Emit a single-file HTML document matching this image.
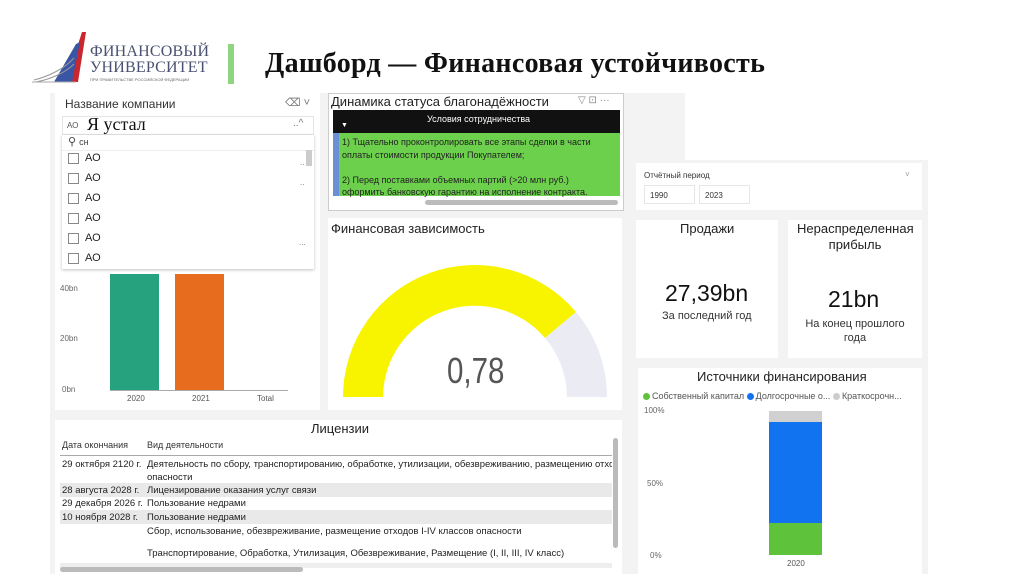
<!DOCTYPE html>
<html><head><meta charset="utf-8"><style>
*{margin:0;padding:0;box-sizing:border-box}
body{width:1024px;height:574px;background:#fff;position:relative;overflow:hidden;font-family:"Liberation Sans","DejaVu Sans",sans-serif;color:#252423}
.a{position:absolute}
.card{position:absolute;background:#fff}
.t{position:absolute;white-space:nowrap}
.s{font-family:"Liberation Sans",sans-serif}
.cb{position:absolute;width:11px;height:11px;border:1px solid #888;background:#fff}
.dot{display:inline-block;width:7px;height:7px;border-radius:50%;margin-right:2px;vertical-align:-0.5px}
</style></head><body>
<div class="a" style="left:50px;top:93px;width:635px;height:481px;background:#f3f3f3"></div>
<div class="a" style="left:630px;top:160px;width:298px;height:414px;background:#f3f3f3"></div>

<svg class="a" style="left:30px;top:30px" width="70" height="55">
<polygon points="52,2 56,2 48,52 36,52" fill="#c8282d"/>
<polygon points="46,14 50,12 42,52 24,52" fill="#3a55a4"/>
<path d="M4,50 C20,46 35,38 44,28" stroke="#999" fill="none" stroke-width="1"/>
<path d="M6,52 C22,49 36,42 44,34" stroke="#999" fill="none" stroke-width="1"/>
<line x1="2" y1="52" x2="46" y2="52" stroke="#aaa"/>
</svg>
<div class="t" style="left:90px;top:43px;font-family:'Liberation Serif',serif;font-size:16px;color:#4a5070;letter-spacing:0.2px">ФИНАНСОВЫЙ</div>
<div class="t" style="left:90px;top:59px;font-family:'Liberation Serif',serif;font-size:16px;color:#4a5070;letter-spacing:0.2px">УНИВЕРСИТЕТ</div>
<div class="t" style="left:90px;top:77px;font-size:4px;color:#666">ПРИ ПРАВИТЕЛЬСТВЕ РОССИЙСКОЙ ФЕДЕРАЦИИ</div>
<div class="a" style="left:228px;top:44px;width:6px;height:40px;background:#8fd47f"></div>
<div class="t" style="left:265px;top:48px;font-family:'Liberation Serif',serif;font-weight:bold;font-size:28px;letter-spacing:0.3px;color:#111">Дашборд — Финансовая устойчивость</div>

<div class="card" style="left:55px;top:214px;width:265px;height:196px"></div>
<div class="t" style="left:59px;top:222px;font-size:14px">Г</div>
<div class="t s" style="left:60px;top:284px;font-size:8px;color:#666">40bn</div>
<div class="t s" style="left:60px;top:334px;font-size:8px;color:#666">20bn</div>
<div class="t s" style="left:62px;top:385px;font-size:8px;color:#666">0bn</div>
<div class="a" style="left:110px;top:272px;width:49px;height:119px;background:#27a27e"></div>
<div class="a" style="left:175px;top:272px;width:49px;height:119px;background:#e86c1d"></div>
<div class="a" style="left:110px;top:390px;width:178px;height:1px;background:#aaa"></div>
<div class="t s" style="left:127px;top:394px;font-size:8px;color:#555">2020</div>
<div class="t s" style="left:192px;top:394px;font-size:8px;color:#555">2021</div>
<div class="t s" style="left:257px;top:394px;font-size:8px;color:#555">Total</div>

<div class="card" style="left:55px;top:92px;width:265px;height:182px"></div>
<div class="t" style="left:65px;top:97px;font-size:12px;color:#333">Название компании</div>
<div class="t" style="left:285px;top:96px;font-size:11px;color:#777">⌫ ˅</div>
<div class="a" style="left:62px;top:116px;width:252px;height:19px;border:1px solid #e4e4e4"></div>
<div class="t s" style="left:67px;top:121px;font-size:8px;color:#555">АО</div>
<div class="t" style="left:87px;top:114px;font-family:'Liberation Serif',serif;font-size:18px;color:#111">Я устал</div>
<div class="t" style="left:293px;top:118px;font-size:10px;color:#777">..^</div>
<div class="a" style="left:62px;top:135px;width:252px;height:134px;background:#fff;box-shadow:0 1px 3px rgba(0,0,0,.25)"></div>
<div class="t" style="left:68px;top:135px;font-size:11px;color:#444">⚲ <span class="s" style="font-size:9px">сн</span></div>
<div class="a" style="left:62px;top:150px;width:252px;height:1px;background:#eee"></div>
<div class="a" style="left:306px;top:150px;width:6px;height:16px;background:#ccc"></div>
<div class="cb" style="left:68px;top:153px"></div><div class="t s" style="left:85px;top:152px;font-size:11px">АО</div>
<div class="cb" style="left:68px;top:173px"></div><div class="t s" style="left:85px;top:172px;font-size:11px">АО</div>
<div class="cb" style="left:68px;top:193px"></div><div class="t s" style="left:85px;top:192px;font-size:11px">АО</div>
<div class="cb" style="left:68px;top:213px"></div><div class="t s" style="left:85px;top:212px;font-size:11px">АО</div>
<div class="cb" style="left:68px;top:233px"></div><div class="t s" style="left:85px;top:232px;font-size:11px">АО</div>
<div class="cb" style="left:68px;top:253px"></div><div class="t s" style="left:85px;top:252px;font-size:11px">АО</div>
<div class="t" style="left:300px;top:158px;font-size:8px;color:#777">..</div>
<div class="t" style="left:300px;top:178px;font-size:8px;color:#777">..</div>
<div class="t" style="left:299px;top:238px;font-size:8px;color:#777">...</div>

<div class="card" style="left:328px;top:93px;width:296px;height:118px;border:1px solid #ccc"></div>
<div class="t" style="left:331px;top:94px;font-size:13px;color:#222">Динамика статуса благонадёжности</div>
<div class="t" style="left:578px;top:95px;font-size:10px;color:#888">▽ ⊡ ···</div>
<div class="a" style="left:333px;top:110px;width:287px;height:23px;background:#111"></div>
<div class="t s" style="left:427px;top:114px;font-size:9px;color:#fff">Условия сотрудничества</div>
<div class="t" style="left:341px;top:122px;font-size:7px;color:#fff">▼</div>
<div class="a" style="left:333px;top:133px;width:6px;height:63px;background:#6a8fd6"></div>
<div class="a" style="left:339px;top:133px;width:281px;height:63px;background:#6cd04c"></div>
<div class="t s" style="left:342px;top:136px;font-size:9px;line-height:12.5px;color:#222">1) Тщательно проконтролировать все этапы сделки в части<br>оплаты стоимости продукции Покупателем;<br><br>2) Перед поставками объемных партий (&gt;20 млн руб.)<br>оформить банковскую гарантию на исполнение контракта.</div>
<div class="a" style="left:425px;top:200px;width:193px;height:5px;border-radius:3px;background:#bbb"></div>

<div class="card" style="left:328px;top:218px;width:294px;height:192px"></div>
<div class="t" style="left:331px;top:221px;font-size:13px;color:#222">Финансовая зависимость</div>
<svg class="a" style="left:0;top:0" width="1024" height="574">
<path d="M343,397 A132,132 0 0 1 576,312 L545,338 A92,92 0 0 0 383,397 Z" fill="#f8f400"/>
<path d="M576,312 A132,132 0 0 1 607,397 L567,397 A92,92 0 0 0 545,338 Z" fill="#ebebf4"/>
</svg>
<div class="t" style="left:447px;top:350px;font-size:36px;color:#555;font-weight:300;transform:scaleX(0.82);transform-origin:left">0,78</div>

<div class="card" style="left:636px;top:163px;width:286px;height:47px"></div>
<div class="t s" style="left:644px;top:171px;font-size:8px;color:#333">Отчётный период</div>
<div class="t" style="left:905px;top:170px;font-size:8px;color:#999">˅</div>
<div class="a" style="left:644px;top:185px;width:51px;height:19px;border:1px solid #e6e6e6"></div>
<div class="a" style="left:699px;top:185px;width:51px;height:19px;border:1px solid #e6e6e6"></div>
<div class="t s" style="left:650px;top:191px;font-size:8px;color:#333">1990</div>
<div class="t s" style="left:705px;top:191px;font-size:8px;color:#333">2023</div>

<div class="card" style="left:636px;top:220px;width:142px;height:138px"></div>
<div class="t" style="left:680px;top:221px;font-size:13px;color:#222">Продажи</div>
<div class="t" style="left:665px;top:280px;font-size:23px;color:#111">27,39bn</div>
<div class="t s" style="left:662px;top:310px;font-size:11px;color:#333">За последний год</div>
<div class="card" style="left:788px;top:220px;width:134px;height:138px"></div>
<div class="t" style="left:797px;top:221px;font-size:13px;color:#222;text-align:center;width:116px;white-space:normal;line-height:16px">Нераспределенная прибыль</div>
<div class="t" style="left:828px;top:286px;font-size:23px;color:#111">21bn</div>
<div class="t s" style="left:797px;top:317px;font-size:11px;line-height:14px;color:#333;text-align:center;width:116px;white-space:normal">На конец прошлого года</div>

<div class="card" style="left:638px;top:368px;width:284px;height:206px"></div>
<div class="t" style="left:697px;top:369px;font-size:13px;color:#222">Источники финансирования</div>
<div class="t s" style="left:643px;top:391px;font-size:9px;color:#555"><span class="dot" style="background:#5ec23a"></span>Собственный капитал <span class="dot" style="background:#1273f0"></span>Долгосрочные о... <span class="dot" style="background:#ccc"></span>Краткосрочн...</div>
<div class="t s" style="left:644px;top:406px;font-size:8px;color:#666">100%</div>
<div class="t s" style="left:647px;top:479px;font-size:8px;color:#666">50%</div>
<div class="t s" style="left:650px;top:551px;font-size:8px;color:#666">0%</div>
<div class="a" style="left:769px;top:411px;width:53px;height:11px;background:#d0d0d0"></div>
<div class="a" style="left:769px;top:422px;width:53px;height:101px;background:#1273f0"></div>
<div class="a" style="left:769px;top:523px;width:53px;height:32px;background:#5ec23a"></div>
<div class="t s" style="left:787px;top:559px;font-size:8px;color:#555">2020</div>

<div class="card" style="left:55px;top:420px;width:567px;height:154px"></div>
<div class="t" style="left:311px;top:421px;font-size:13px;color:#222">Лицензии</div>
<div class="t s" style="left:62px;top:440px;font-size:9px;color:#333">Дата окончания</div>
<div class="t s" style="left:147px;top:440px;font-size:9px;color:#333">Вид деятельности</div>
<div class="a" style="left:60px;top:455px;width:552px;height:1px;background:#aaa"></div>
<div class="t s" style="left:62px;top:459px;font-size:9.5px;line-height:12.5px;color:#222">29 октября 2120 г.</div>
<div class="t s" style="left:147px;top:459px;font-size:9.5px;line-height:12.5px;color:#222;width:465px;overflow:hidden">Деятельность по сбору, транспортированию, обработке, утилизации, обезвреживанию, размещению отходов<br>опасности</div>
<div class="a" style="left:60px;top:483px;width:552px;height:14px;background:#e9e9e9"></div>
<div class="t s" style="left:62px;top:485px;font-size:9.5px;color:#222">28 августа 2028 г.</div>
<div class="t s" style="left:147px;top:485px;font-size:9.5px;color:#222">Лицензирование оказания услуг связи</div>
<div class="t s" style="left:62px;top:498px;font-size:9.5px;color:#222">29 декабря 2026 г.</div>
<div class="t s" style="left:147px;top:498px;font-size:9.5px;color:#222">Пользование недрами</div>
<div class="a" style="left:60px;top:510px;width:552px;height:14px;background:#e9e9e9"></div>
<div class="t s" style="left:62px;top:512px;font-size:9.5px;color:#222">10 ноября 2028 г.</div>
<div class="t s" style="left:147px;top:512px;font-size:9.5px;color:#222">Пользование недрами</div>
<div class="t s" style="left:147px;top:526px;font-size:9.5px;color:#222">Сбор, использование, обезвреживание, размещение отходов I-IV классов опасности</div>
<div class="t s" style="left:147px;top:548px;font-size:9.5px;color:#222">Транспортирование, Обработка, Утилизация, Обезвреживание, Размещение (I, II, III, IV класс)</div>
<div class="a" style="left:60px;top:563px;width:552px;height:5px;background:#eee"></div>
<div class="a" style="left:60px;top:567px;width:243px;height:5px;border-radius:3px;background:#bbb"></div>
<div class="a" style="left:613px;top:438px;width:5px;height:110px;border-radius:3px;background:#bbb"></div>
</body></html>
